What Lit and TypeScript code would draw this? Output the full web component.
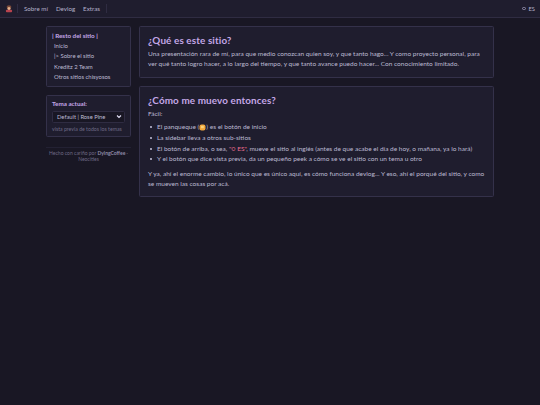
import { LitElement, html, css } from "lit";
import { customElement } from "lit/decorators.js";

@customElement("app-root")
export class AppRoot extends LitElement {
  static styles = css`
    :host {
      display: block;
      height: 405px;
      overflow: hidden;
      background: #191724;
      color: #c2bfd8;
      font-family: "Lato", "Noto Sans", sans-serif;
      font-weight: 400;
    }
    nav {
      height: 17px;
      background: #1f1d2e;
      border-bottom: 1px solid #2f2c42;
      display: flex;
      align-items: center;
      padding: 0 5px 0 5px;
      color: #b4b1ca;
    }
    .logo { width: 8px; height: 8px; display: block; }
    .sep { width: 1px; height: 9px; background: #2f2c42; }
    .logo-sep { margin: 0 6px 0 4px; }
    .links { display: flex; gap: 8px; font-size: 6.2px; }
    .links-sep { margin-left: 6px; }
    .lang { margin-left: auto; font-size: 5.8px; display: flex; gap: 3px; align-items: center; }
    .ring { width: 3.5px; height: 3.5px; border: 0.7px solid #908caa; border-radius: 50%; box-sizing: border-box; }
    .wrap {
      display: flex;
      align-items: flex-start;
      gap: 8px;
      padding: 8px 0 0 46px;
    }
    aside { width: 85px; display: flex; flex-direction: column; gap: 8px; }
    .card {
      background: #1f1d2e;
      border: 1px solid #34314a;
      border-radius: 1.5px;
      box-sizing: border-box;
    }
    .menu { height: 61px; padding: 2.5px 5px; }
    .menu b { display: block; color: #c4a7e7; font-weight: 700; font-size: 6.3px; line-height: 11px; }
    .menu div { padding-left: 2px; line-height: 10.6px; font-size: 5.95px; color: #bdbad2; }
    .theme { height: 42px; padding: 3px 5px; }
    .theme b { display: block; color: #c4a7e7; font-weight: 700; font-size: 6.3px; line-height: 10px; }
    .select {
      height: 12px;
      margin-top: 1.5px;
      box-sizing: border-box;
      background: #191724;
      border: 1px solid #2f2c42;
      border-radius: 1.5px;
      display: flex;
      align-items: center;
      justify-content: space-between;
      padding: 0 2px 0 4px;
      font-size: 5.8px;
      color: #bdbad2;
    }
    .select svg { width: 6px; height: 5px; display: block; }
    .preview { display: block; font-size: 5.2px; color: #6e6a86; line-height: 10px; margin-top: 1px; white-space: nowrap; }
    .foot {
      margin-top: 1.5px;
      padding-top: 2px;
      border-top: 1px solid #232133;
      text-align: center;
      font-size: 5px;
      line-height: 6.2px;
      color: #6e6a86;
      white-space: nowrap;
    }
    .foot strong { color: #908caa; font-weight: 700; }
    main { width: 354.5px; display: flex; flex-direction: column; gap: 8px; }
    main .card { padding: 6px 8px 0 8px; }
    h2 {
      margin: 0 0 2.3px;
      color: #c4a7e7;
      font-size: 9.9px;
      line-height: 14px;
      font-weight: 700;
      letter-spacing: 0.12px;
    }
    .one { height: 52px; }
    .two { height: 111px; }
    p { margin: 0; font-size: 6.52px; line-height: 10px; color: #bdbad2; white-space: nowrap; }
    ul { margin: 3px 0 3.6px; padding: 0 0 0 9px; list-style: none; }
    li { font-size: 6.52px; line-height: 10.7px; color: #bdbad2; position: relative; white-space: nowrap; }
    li::before {
      content: "";
      position: absolute;
      left: -7px;
      top: 4px;
      width: 2px;
      height: 2px;
      border-radius: 50%;
      background: #c6c3dc;
    }
    .pancake { display: inline-block; width: 7px; height: 7px; vertical-align: -1.5px; }
    .code { color: #eb6f92; }
  `;

  render() {
    return html`
      <nav>
        <svg class="logo" viewBox="0 0 10 10" aria-hidden="true">
          <ellipse cx="5" cy="2.6" rx="3" ry="2.2" fill="#7a4a3a" />
          <circle cx="5" cy="4.5" r="2" fill="#e8b48c" />
          <rect x="1.2" y="5.8" width="7.6" height="3.4" rx="1" fill="#b8434e" />
        </svg>
        <span class="sep logo-sep"></span>
        <div class="links"><span>Sobre mí</span><span>Devlog</span><span>Extras</span></div>
        <span class="sep links-sep"></span>
        <div class="lang"><span class="ring"></span><span>ES</span></div>
      </nav>
      <div class="wrap">
        <aside>
          <section class="card menu">
            <b>| Resto del sitio |</b>
            <div>Inicio</div>
            <div>|&gt; Sobre el sitio</div>
            <div>Kreditz 2 Team</div>
            <div>Otros sitios chisyosos</div>
          </section>
          <section class="card theme">
            <b>Tema actual:</b>
            <div class="select">
              <span>Default | Rose Pine</span>
              <svg viewBox="0 0 6 5"><path d="M1 1.5 3 3.5 5 1.5" fill="none" stroke="#e0def4" stroke-width="1.1" /></svg>
            </div>
            <span class="preview">vista previa de todos los temas</span>
          </section>
          <div class="foot">Hecho con cariño por <strong>DyingCoffee</strong> ·<br />Neocities</div>
        </aside>
        <main>
          <section class="card one">
            <h2>¿Qué es este sitio?</h2>
            <p>Una presentación rara de mí, para que medio conozcan quien soy, y que tanto hago... Y como proyecto personal, para</p>
            <p>ver qué tanto logro hacer, a lo largo del tiempo, y que tanto avance puedo hacer... Con conocimiento limitado.</p>
          </section>
          <section class="card two">
            <h2>¿Cómo me muevo entonces?</h2>
            <p>Fácil:</p>
            <ul>
              <li>El panqueque (<svg class="pancake" viewBox="0 0 7 7"><rect x="0.5" y="0.5" width="6" height="6" rx="2" fill="#f0a63c" /><rect x="2" y="1.8" width="2.8" height="2.4" fill="#f8d27a" /></svg>) es el botón de inicio</li>
              <li>La sidebar lleva a otros sub-sitios</li>
              <li>El botón de arriba, o sea, <span class="code">"○ ES"</span>, mueve el sitio al inglés (antes de que acabe el día de hoy, o mañana, ya lo hará)</li>
              <li>Y el botón que dice vista previa, da un pequeño peek a cómo se ve el sitio con un tema u otro</li>
            </ul>
            <p>Y ya, ahí el enorme cambio, lo único que es único aquí, es cómo funciona devlog... Y eso, ahí el porqué del sitio, y como</p>
            <p>se mueven las cosas por acá.</p>
          </section>
        </main>
      </div>
    `;
  }
}
